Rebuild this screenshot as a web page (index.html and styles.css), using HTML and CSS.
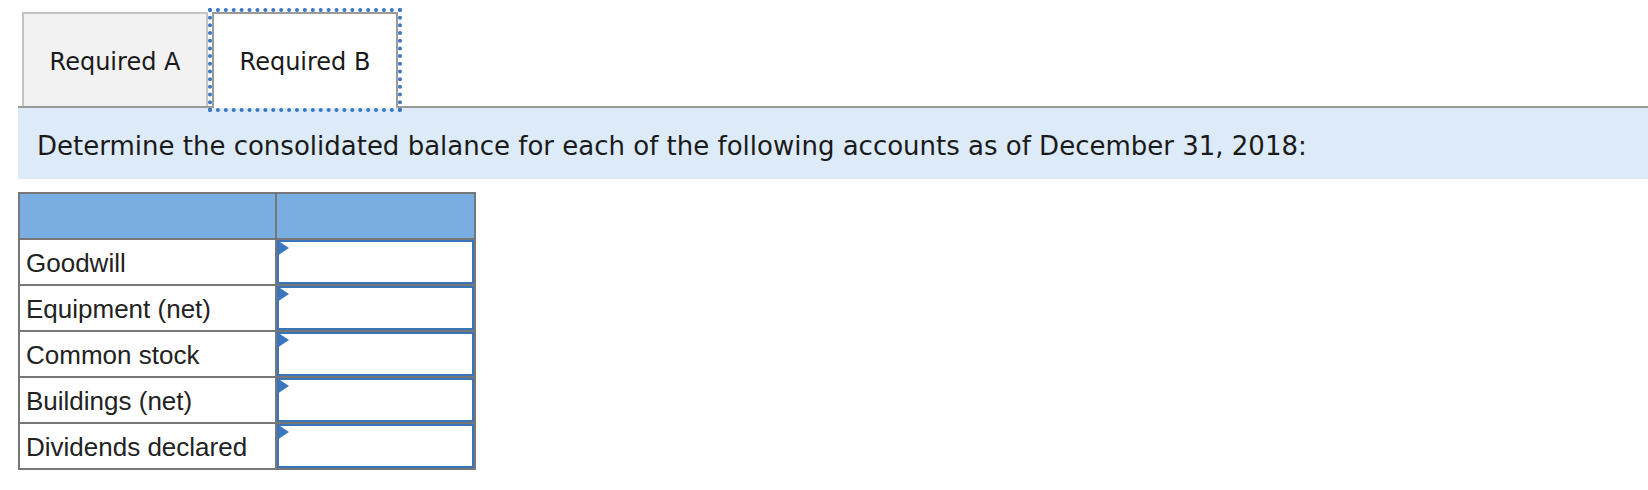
FILE: index.html
```html
<!DOCTYPE html>
<html lang="en">
<head>
<meta charset="utf-8">
<title>Required B</title>
<link rel="stylesheet" href="styles.css">
</head>
<body>
<div class="page">
  <div class="tabs">
    <div class="tab tab-a">Required A</div>
    <div class="tab tab-b">Required B</div>
  </div>
  <div class="banner">Determine the consolidated balance for each of the following accounts as of December 31, 2018:</div>
  <table class="grid">
    <tr class="head"><th class="c1"></th><th class="c2"></th></tr>
    <tr><td class="c1">Goodwill</td><td class="c2"><div class="field"><span class="mark"></span></div></td></tr>
    <tr><td class="c1">Equipment (net)</td><td class="c2"><div class="field"><span class="mark"></span></div></td></tr>
    <tr><td class="c1">Common stock</td><td class="c2"><div class="field"><span class="mark"></span></div></td></tr>
    <tr><td class="c1">Buildings (net)</td><td class="c2"><div class="field"><span class="mark"></span></div></td></tr>
    <tr><td class="c1">Dividends declared</td><td class="c2"><div class="field"><span class="mark"></span></div></td></tr>
  </table>
</div>
</body>
</html>
```
FILE: styles.css
```css
html, body {
  margin: 0;
  padding: 0;
  background: #ffffff;
}
.page {
  padding: 12px 0 0 18px;
}
.tabs {
  display: flex;
  gap: 4px;
  padding-left: 4px;
  border-bottom: 2px solid #9a9a9a;
  height: 94px;
}
.tab {
  box-sizing: border-box;
  width: 186px;
  height: 94px;
  display: flex;
  align-items: center;
  justify-content: center;
  font-family: "DejaVu Sans", Verdana, sans-serif;
  font-size: 24px;
  color: #1a1a1a;
  border: 2px solid #c3c3c3;
  border-bottom: none;
  padding-top: 3px;
}
.tab-a {
  background: #f2f2f2;
}
.tab-b {
  background: #ffffff;
  border-color: #9a9a9a;
  height: 96px;
  margin-bottom: -2px;
  padding-bottom: 2px;
  outline: 4px dotted #3b77c2;
}
.banner {
  background: #dcebf7;
  height: 71px;
  box-sizing: border-box;
  padding: 0 0 0 19px;
  display: flex;
  align-items: center;
  font-family: "DejaVu Sans", Verdana, sans-serif;
  font-size: 26px;
  color: #1a1a1a;
  padding-top: 4px;
}
.grid {
  margin-top: 13px;
  border-collapse: separate;
  border-spacing: 0;
  border-top: 2px solid #777777;
  border-left: 2px solid #777777;
}
.grid th, .grid td {
  padding: 0;
  height: 44px;
  border-right: 2px solid #777777;
  border-bottom: 2px solid #777777;
  box-sizing: content-box;
}
.grid .head th {
  background: #7aaee2;
}
.grid .c1 {
  font-family: "Liberation Sans", Arial, sans-serif;
  font-size: 26px;
  color: #222222;
  padding-left: 6px;
  padding-top: 2px;
  height: 42px;
  width: 249px;
  text-align: left;
  vertical-align: middle;
}
.grid .c2 {
  width: 197px;
}
.field {
  position: relative;
  box-sizing: border-box;
  width: 197px;
  height: 44px;
  border: 2px solid #3a74b9;
  background: #ffffff;
}
.mark {
  position: absolute;
  left: -2px;
  top: -2px;
  width: 0;
  height: 0;
  border-left: 12px solid #3a77c0;
  border-top: 8px solid transparent;
  border-bottom: 8px solid transparent;
}
```
